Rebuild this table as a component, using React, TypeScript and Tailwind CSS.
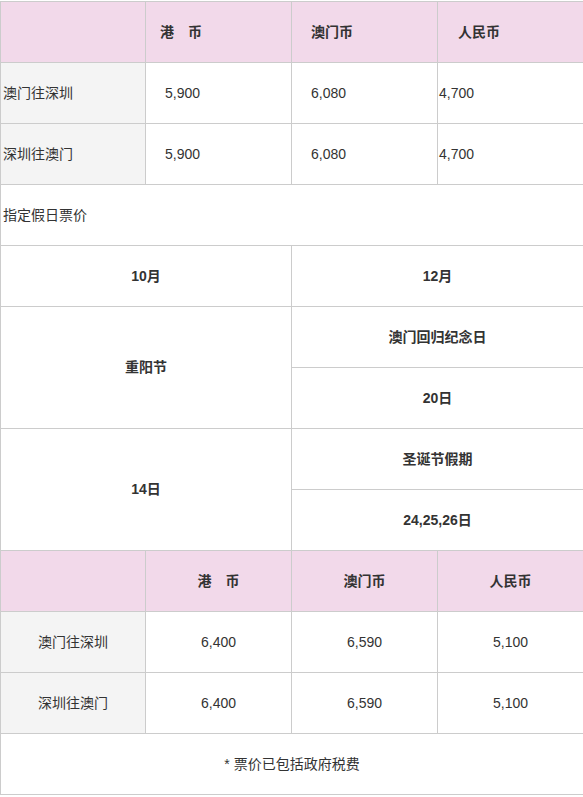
const font = { fontFamily: '"Liberation Sans", "Noto Sans CJK SC", sans-serif' };

function Cell({
  children,
  className = '',
}: {
  children?: React.ReactNode;
  className?: string;
}) {
  return <div className={`flex items-center h-[60px] ${className}`}>{children}</div>;
}

const pink = 'bg-[#f2d9ea]';
const gray = 'bg-[#f4f4f4]';

export default function App() {
  return (
    <div className="w-[583px] overflow-hidden bg-white" style={font}>
      <div className="mt-px w-[584px] grid grid-cols-[144px_145px_145px_145px] gap-px p-px bg-[#cccccc] text-[14px] text-[#333333]">
        {/* regular fares */}
        <Cell className={pink} />
        <Cell className={`${pink} pl-[14px] font-bold`}>港　币</Cell>
        <Cell className={`${pink} pl-[19px] font-bold`}>澳门币</Cell>
        <Cell className={`${pink} pl-[20px] font-bold`}>人民币</Cell>

        <Cell className={`${gray} pl-[2px]`}>澳门往深圳</Cell>
        <Cell className="bg-white pl-[19px]">5,900</Cell>
        <Cell className="bg-white pl-[19px]">6,080</Cell>
        <Cell className="bg-white pl-[1px]">4,700</Cell>

        <Cell className={`${gray} pl-[2px]`}>深圳往澳门</Cell>
        <Cell className="bg-white pl-[19px]">5,900</Cell>
        <Cell className="bg-white pl-[19px]">6,080</Cell>
        <Cell className="bg-white pl-[1px]">4,700</Cell>

        <Cell className="col-span-4 bg-white pl-[2px]">指定假日票价</Cell>

        {/* holidays */}
        <Cell className="col-span-2 bg-white justify-center font-bold">10月</Cell>
        <Cell className="col-span-2 bg-white justify-center font-bold">12月</Cell>

        <div className="col-span-2 row-span-2 bg-white flex items-center justify-center font-bold">重阳节</div>
        <Cell className="col-span-2 bg-white justify-center font-bold">澳门回归纪念日</Cell>
        <Cell className="col-span-2 bg-white justify-center font-bold">20日</Cell>

        <div className="col-span-2 row-span-2 bg-white flex items-center justify-center font-bold">14日</div>
        <Cell className="col-span-2 bg-white justify-center font-bold">圣诞节假期</Cell>
        <Cell className="col-span-2 bg-white justify-center font-bold">24,25,26日</Cell>

        {/* holiday fares */}
        <Cell className={pink} />
        <Cell className={`${pink} justify-center font-bold`}>港　币</Cell>
        <Cell className={`${pink} justify-center font-bold`}>澳门币</Cell>
        <Cell className={`${pink} justify-center font-bold`}>人民币</Cell>

        <Cell className={`${gray} justify-center`}>澳门往深圳</Cell>
        <Cell className="bg-white justify-center">6,400</Cell>
        <Cell className="bg-white justify-center">6,590</Cell>
        <Cell className="bg-white justify-center">5,100</Cell>

        <Cell className={`${gray} justify-center`}>深圳往澳门</Cell>
        <Cell className="bg-white justify-center">6,400</Cell>
        <Cell className="bg-white justify-center">6,590</Cell>
        <Cell className="bg-white justify-center">5,100</Cell>

        <Cell className="col-span-4 bg-white justify-center">* 票价已包括政府税费</Cell>
      </div>
    </div>
  );
}
